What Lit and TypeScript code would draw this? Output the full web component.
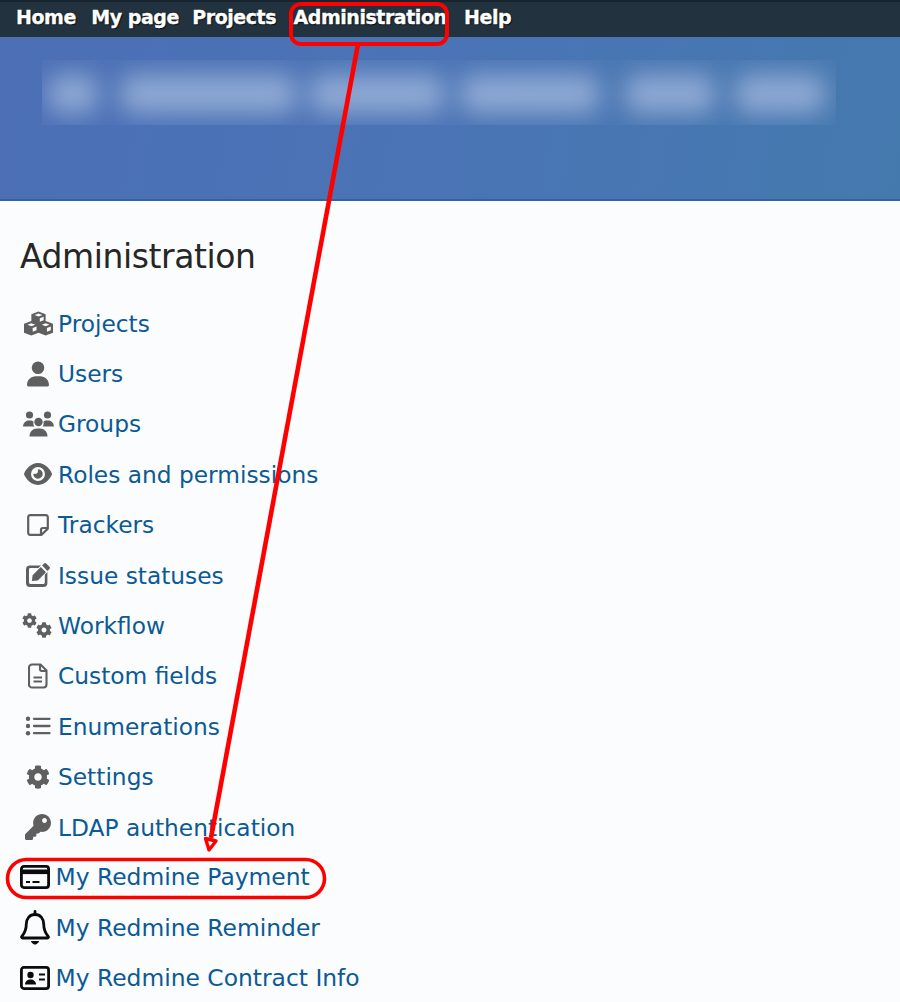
import { LitElement, html, css, svg } from "lit";
import { customElement } from "lit/decorators.js";

const gear = "M487.4 315.7l-42.6-24.6c4.3-23.2 4.3-47 0-70.2l42.6-24.6c4.9-2.8 7.1-8.6 5.5-14-11.1-35.6-30-67.8-54.7-94.6-3.8-4.1-10-5.1-14.8-2.3L380.8 110c-17.9-15.4-38.5-27.3-60.8-35.1V25.8c0-5.6-3.9-10.5-9.4-11.7-36.7-8.2-74.3-7.8-109.2 0-5.5 1.2-9.4 6.1-9.4 11.7V75c-22.2 7.9-42.8 19.8-60.8 35.1L88.7 85.5c-4.9-2.8-11-1.9-14.8 2.3-24.7 26.7-43.6 58.9-54.7 94.6-1.7 5.4.6 11.2 5.5 14L67.3 221c-4.3 23.2-4.3 47 0 70.2l-42.6 24.6c-4.9 2.8-7.1 8.6-5.5 14 11.1 35.6 30 67.8 54.7 94.6 3.8 4.1 10 5.1 14.8 2.3l42.6-24.6c17.9 15.4 38.5 27.3 60.8 35.1v49.2c0 5.6 3.9 10.5 9.4 11.7 36.7 8.2 74.3 7.8 109.2 0 5.5-1.2 9.4-6.1 9.4-11.7v-49.2c22.2-7.9 42.8-19.8 60.8-35.1l42.6 24.6c4.9 2.8 11 1.9 14.8-2.3 24.7-26.7 43.6-58.9 54.7-94.6 1.5-5.5-.7-11.3-5.6-14.1zM256 336c-44.1 0-80-35.9-80-80s35.9-80 80-80 80 35.9 80 80-35.9 80-80 80z";

const icon = (w: number, h: number, vb: string, body: unknown) =>
  html`<svg class="ico" width=${w} height=${h} viewBox=${vb}>${body}</svg>`;

const G = "#5f5f5f";
const K = "#0b0b0b";
const BG = "#fbfcfe";

const icons: Record<string, unknown> = {
  cubes: icon(29, 25, "1.6 0 26.8 22.4", svg`
    <path fill=${G} d="M15 0l6.6 2.6v6.2L28.4 11.4v8.4L21.6 22.4 15 19.8 8.4 22.4 1.6 19.8v-8.4L8.4 8.8V2.6z"/>
    <g fill=${BG}>
      <path d="M15 2l3.6 1.3L15 4.7l-3.6-1.4z"/>
      <path d="M16.2 6.4l3.6-1.4v3.2l-3.6 1.4z"/>
      <path d="M8.4 11l3.6 1.3-3.6 1.4-3.6-1.4z"/>
      <path d="M21.6 11l3.6 1.3-3.6 1.4-3.6-1.4z"/>
      <path d="M9.6 15.4l3.6-1.4v3.4l-3.6 1.5z"/>
      <path d="M22.8 15.4l3.6-1.4v3.4l-3.6 1.5z"/>
    </g>`),
  user: icon(22, 26, "0 0 448 512", svg`<path fill=${G} d="M224 256A128 128 0 1 0 224 0a128 128 0 1 0 0 256zm-45.7 48C79.8 304 0 383.8 0 482.3C0 498.7 13.3 512 29.7 512H418.3c16.4 0 29.7-13.3 29.7-29.7C448 383.8 368.2 304 269.7 304H178.3z"/>`),
  users: icon(31, 26, "0 0 31 26", svg`
    <g fill=${G}>
      <circle cx="6.5" cy="4" r="3.6"/>
      <circle cx="24.5" cy="4" r="3.6"/>
      <circle cx="15.5" cy="11" r="4.2"/>
      <path d="M0 15.5c.3-3.6 2.8-6 5.5-6h2c1.2 0 2.3.5 3.1 1.2-.5 1.7-.2 3.4.7 4.8z"/>
      <path d="M31 15.5c-.3-3.6-2.8-6-5.5-6h-2c-1.2 0-2.3.5-3.1 1.2.5 1.7.2 3.4-.7 4.8z"/>
      <path d="M6.5 25.5c0-5 3.4-8 7.5-8h3c4.1 0 7.5 3 7.5 8z"/>
    </g>`),
  eye: icon(28, 26, "0 0 576 512", svg`<path fill=${G} d="M288 32c-80.8 0-145.5 36.8-192.6 80.6C48.6 156 17.3 208 2.5 243.7c-3.3 7.9-3.3 16.7 0 24.6C17.3 304 48.6 356 95.4 399.4C142.5 443.2 207.2 480 288 480s145.5-36.8 192.6-80.6c46.8-43.5 78.1-95.4 93-131.1c3.3-7.9 3.3-16.7 0-24.6c-14.9-35.7-46.2-87.7-93-131.1C433.5 68.8 368.8 32 288 32zM144 256a144 144 0 1 1 288 0 144 144 0 1 1 -288 0zm144-64c0 35.3-28.7 64-64 64c-7.1 0-13.9-1.2-20.3-3.3c-5.5-1.8-11.9 1.6-11.7 7.4c.3 6.9 1.3 13.8 3.2 20.7c13.7 51.2 66.4 81.6 117.6 67.9s81.6-66.4 67.9-117.6c-11.1-41.5-47.8-69.4-88.6-71.1c-5.8-.2-9.2 6.1-7.4 11.7c2.1 6.4 3.3 13.2 3.3 20.3z"/>`),
  note: icon(24, 24, "0 0 24 24", svg`<path fill="none" stroke=${G} stroke-width="2.2" stroke-linejoin="round" d="M4 2.2h16a1.8 1.8 0 0 1 1.8 1.8v11.6l-6.2 6.2H4A1.8 1.8 0 0 1 2.2 20V4A1.8 1.8 0 0 1 4 2.2zM21.8 15h-4.8a2 2 0 0 0-2 2v4.8"/>`),
  pen: icon(26, 26, "0 0 26 26", svg`
    <path fill=${G} d="M5 3.5h11l-2.6 2.6H5.3a1.3 1.3 0 0 0-1.3 1.3v13.2a1.3 1.3 0 0 0 1.3 1.3h13.2a1.3 1.3 0 0 0 1.3-1.3v-8l2.6-2.6V21a4 4 0 0 1-4 4H5a4 4 0 0 1-4-4V7.5a4 4 0 0 1 4-4z"/>
    <path fill=${G} stroke=${BG} stroke-width="1.1" paint-order="stroke" d="M21.2 1.5l3.3 3.3a1.5 1.5 0 0 1 0 2.1l-2 2-5.4-5.4 2-2a1.5 1.5 0 0 1 2.1 0zM15.8 5l5.2 5.2-8.2 8.2-5.9.7.7-5.9z"/>`),
  cogs: icon(32, 26, "0 0 32 26", svg`
    <svg x="0" y="0" width="15" height="15" viewBox="0 0 512 512"><path fill=${G} d=${gear}/></svg>
    <svg x="14" y="9" width="16" height="16" viewBox="0 0 512 512"><path fill=${G} d=${gear}/></svg>`),
  file: icon(20, 26, "0 0 20 26", svg`
    <path fill="none" stroke=${G} stroke-width="2.1" stroke-linejoin="round" d="M4 1.5h8.5L18.5 7.5V21.5a3 3 0 0 1-3 3H4a3 3 0 0 1-3-3v-17a3 3 0 0 1 3-3zM12 1.8v4.2a2 2 0 0 0 2 2h4.2"/>
    <path stroke=${G} stroke-width="2" d="M5.5 14.5h8.5M5.5 18.5h8.5"/>`),
  list: icon(26, 20, "0 0 26 20", svg`
    <g fill=${G}><circle cx="3" cy="2.8" r="2.2"/><circle cx="3" cy="10" r="2.2"/><circle cx="3" cy="17.2" r="2.2"/></g>
    <path stroke=${G} stroke-width="2.3" stroke-linecap="round" d="M9 2.8h15.5M9 10h15.5M9 17.2h15.5"/>`),
  gear: icon(24, 26, "0 0 512 512", svg`<path fill=${G} d=${gear}/>`),
  key: icon(26, 26, "0 0 512 512", svg`<path fill=${G} d="M512 176.001C512 273.203 433.202 352 336 352c-11.22 0-22.19-1.062-32.827-3.069l-24.012 27.014A23.999 23.999 0 0 1 261.223 384H224v40c0 13.255-10.745 24-24 24h-40v40c0 13.255-10.745 24-24 24H24c-13.255 0-24-10.745-24-24v-78.059c0-6.365 2.529-12.47 7.029-16.971l161.802-161.802C163.108 213.814 160 195.271 160 176 160 78.798 238.797.001 335.999 0 433.488-.001 512 78.511 512 176.001zM336 128c0 26.51 21.49 48 48 48s48-21.49 48-48-21.49-48-48-48-48 21.49-48 48z"/>`),
  card: icon(30, 24, "0 0 30 24", svg`
    <rect x="1.4" y="1.4" width="27.2" height="21.2" rx="2.5" fill="none" stroke=${K} stroke-width="2.8"/>
    <rect x="1.4" y="4.5" width="27.2" height="4.6" fill=${K}/>
    <path stroke=${K} stroke-width="2.2" d="M6 17h4M12.5 17h7"/>`),
  bell: icon(30, 36, "0 0 30 36", svg`
    <path fill="none" stroke=${K} stroke-width="2.8" stroke-linejoin="round" d="M15 4.5c-5.5 0-8.7 4.3-8.7 9.5 0 6.5-1.5 9-4.5 12.5a.9.9 0 0 0 .7 1.5h25a.9.9 0 0 0 .7-1.5c-3-3.5-4.5-6-4.5-12.5 0-5.2-3.2-9.5-8.7-9.500z"/>
    <path stroke=${K} stroke-width="2.8" stroke-linecap="round" d="M15 1.5v3"/>
    <path fill=${K} d="M11 31h8c0 1.5-2.4 3.5-4 3.5S11 32.5 11 31z"/>`),
  id: icon(30, 24, "0 0 30 24", svg`
    <rect x="1.4" y="1.4" width="27.2" height="21.2" rx="2.5" fill="none" stroke=${K} stroke-width="2.8"/>
    <circle cx="10.5" cy="9" r="3.2" fill=${K}/>
    <path fill=${K} d="M5 18.5c0-3 2.4-5 5.5-5s5.5 2 5.5 5z"/>
    <path stroke=${K} stroke-width="2.2" d="M19 8.5h6M19 13.5h6"/>`),
};

const rows = [
  ["cubes", "Projects"], ["user", "Users"], ["users", "Groups"], ["eye", "Roles and permissions"],
  ["note", "Trackers"], ["pen", "Issue statuses"], ["cogs", "Workflow"], ["file", "Custom fields"],
  ["list", "Enumerations"], ["gear", "Settings"], ["key", "LDAP authentication"],
  ["card", "My Redmine Payment"], ["bell", "My Redmine Reminder"], ["id", "My Redmine Contract Info"],
];

const smears = [
  { gap: 0, w: 50 }, { gap: 22, w: 177 }, { gap: 12, w: 136 },
  { gap: 15, w: 140 }, { gap: 25, w: 90 }, { gap: 20, w: 90 },
];

@customElement("app-root")
export class AppRoot extends LitElement {
  static styles = css`
    :host { display: block; position: relative; width: 900px; height: 1002px; overflow: hidden; background: #fbfcfe; font-family: "DejaVu Sans", sans-serif; }
    nav { display: flex; align-items: center; gap: 15.4px; height: 37px; box-sizing: border-box; padding: 0 16px 6px; background: #22323f; border-top: 2px solid #162430; }
    nav a { color: #fff; font-weight: 700; font-size: 19px; letter-spacing: -0.45px; -webkit-text-stroke: 0.35px #fff; text-shadow: 0 0 1.5px #000, 1px 1px 1px rgba(0,0,0,.7); white-space: nowrap; }
    nav a:nth-child(3) { margin-left: -2px; }
    nav a:nth-child(4) { margin-left: 2px; }
    nav a:nth-child(5) { margin-left: 2px; }
    .banner { height: 164px; box-sizing: border-box; padding: 23px 64px 0 42px; background: linear-gradient(100deg, #4c6fb6 0%, #4a74b5 50%, #4479ae 100%); border-bottom: 2px solid #2f63a3; }
    .veil { height: 65px; overflow: hidden; display: flex; padding: 15px 0 0 6px; box-sizing: border-box; align-items: flex-start; background: rgba(255,255,255,.018); }
    .veil i { display: block; height: 38px; background: #8fa9d4; filter: blur(12px); border-radius: 14px; flex: none; }
    main { padding: 0 0 0 20px; }
    h1 { margin: 0; padding-top: 34px; font-weight: 400; font-size: 33px; line-height: 44px; color: #262626; letter-spacing: -0.42px; }
    ul { list-style: none; margin: 19px 0 0; padding: 0; }
    li { display: flex; align-items: center; height: 50.4px; font-size: 23.3px; color: #0b5a94; white-space: nowrap; }
    li.alt { font-size: 23.4px; }
    .slot { width: 38px; flex: none; display: flex; justify-content: center; padding-right: 2px; box-sizing: border-box; }
    .alt .slot { width: 35.5px; justify-content: flex-start; padding: 0; }
    .ico { display: block; flex: none; }
    .marks { position: absolute; inset: 0; width: 900px; height: 1002px; pointer-events: none; }
  `;

  render() {
    return html`
      <nav>
        ${["Home", "My page", "Projects", "Administration", "Help"].map((t) => html`<a>${t}</a>`)}
      </nav>
      <div class="banner">
        <div class="veil">
          ${smears.map((s) => html`<i style="width:${s.w}px;margin-left:${s.gap}px"></i>`)}
        </div>
      </div>
      <main>
        <h1>Administration</h1>
        <ul>
          ${rows.map(([k, t], i) => html`<li class=${i > 10 ? "alt" : ""}><span class="slot">${icons[k]}</span><span>${t}</span></li>`)}
        </ul>
      </main>
      <svg class="marks" viewBox="0 0 900 1002" fill="none" stroke="#ff0000" stroke-width="4">
        <rect x="291" y="4" width="156" height="40" rx="10"/>
        <rect x="7.5" y="859.5" width="317" height="38" rx="19" stroke-width="3.6"/>
        <path d="M358 44L211 838" stroke-width="4.6"/>
        <path d="M205.5 838.5L216 841L209 850Z" stroke-linejoin="round" stroke-width="3.4"/>
      </svg>
    `;
  }
}
